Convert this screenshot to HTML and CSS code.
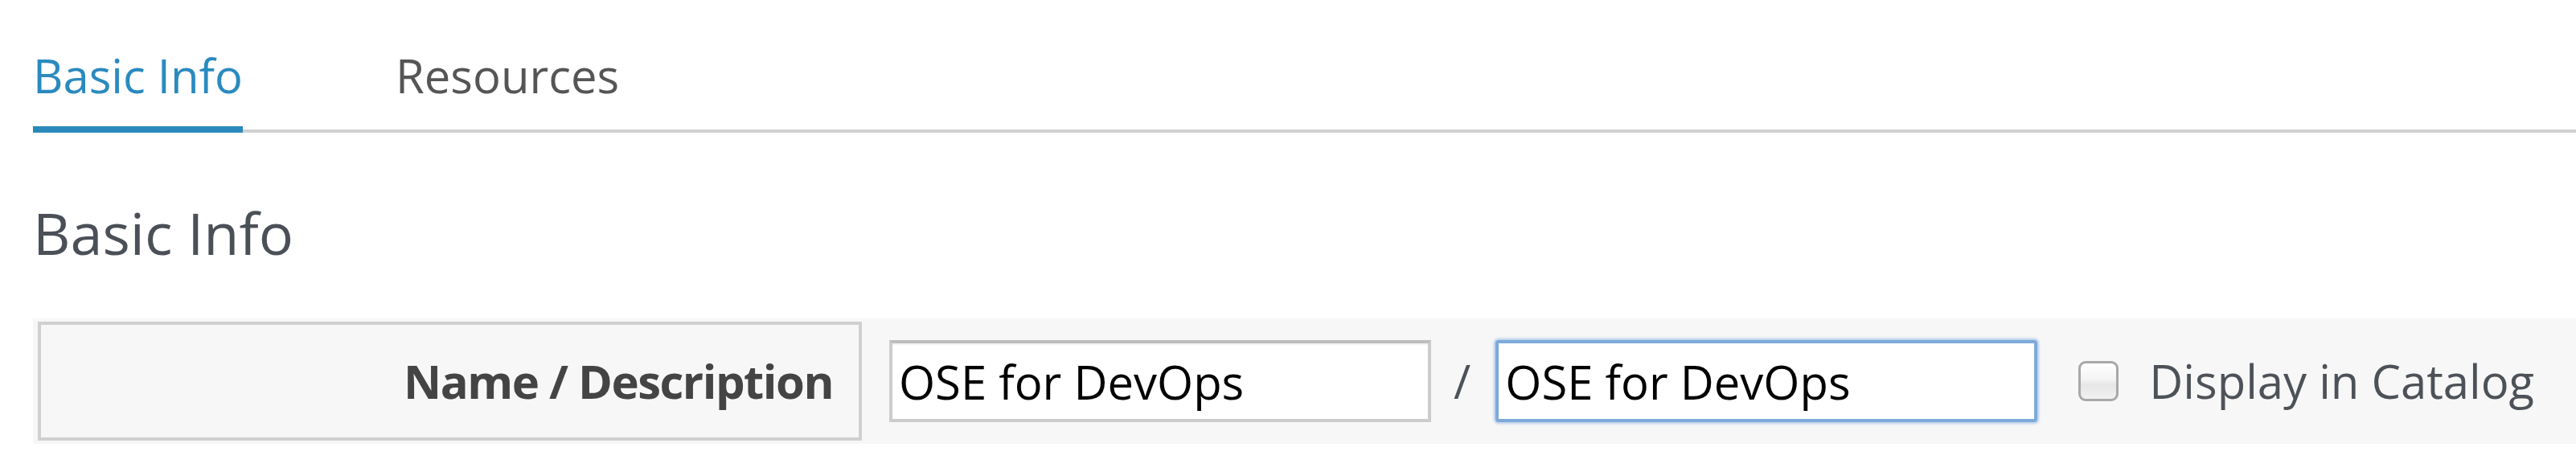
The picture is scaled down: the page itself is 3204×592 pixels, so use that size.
FILE: index.html
```html
<!DOCTYPE html>
<html lang="en">
<head>
<meta charset="utf-8">
<title>Basic Info</title>
<link rel="stylesheet" href="styles.css">
</head>
<body>
<div class="page">
  <ul class="tabs">
    <li class="tab active"><a href="#">Basic Info</a></li>
    <li class="tab"><a href="#">Resources</a></li>
  </ul>
  <h3 class="section-title">Basic Info</h3>
  <div class="form-row">
    <div class="row-label">Name / Description</div>
    <div class="row-fields">
      <input class="field" type="text" value="OSE for DevOps">
      <span class="sep">/</span>
      <input class="field focused" type="text" value="OSE for DevOps">
      <label class="check"><input class="check-box" type="checkbox"><span class="check-text">Display in Catalog</span></label>
    </div>
  </div>
</div>
</body>
</html>
```

FILE: styles.css
```css
html, body {
  margin: 0;
  padding: 0;
  background: #fff;
}

body {
  font-family: "Open Sans", "Liberation Sans", sans-serif;
  color: #4d5258;
}

.page {
  padding: 0 0 0 41px;
}

.tabs {
  list-style: none;
  margin: 0;
  padding: 0;
  display: flex;
  align-items: flex-end;
  border-bottom: 4px solid #d1d1d1;
}

.tab {
  margin-right: 190px;
}

.tab a {
  display: block;
  font-size: 58px;
  line-height: 80px;
  padding: 54px 0 23px 0;
  border-bottom: 8px solid transparent;
  margin-bottom: -4px;
  color: #555;
  text-decoration: none;
}

.tab.active a {
  color: #2a8abf;
  border-bottom-color: #2a89bb;
}

.section-title {
  margin: 75px 0 58px 0;
  font-size: 72px;
  font-weight: 400;
  line-height: 98px;
  color: #4b5058;
}

.form-row {
  display: flex;
  align-items: center;
  background: #f7f7f7;
  padding: 4px 0 4px 6px;
}

.row-label {
  box-sizing: border-box;
  width: 1025px;
  height: 148px;
  border: 4px solid #d0d0d0;
  display: flex;
  align-items: center;
  justify-content: flex-end;
  padding-right: 32px;
  font-size: 58px;
  font-weight: 700;
  letter-spacing: -1.5px;
  color: #444;
  line-height: 80px;
}

.row-fields {
  display: flex;
  align-items: center;
  margin-left: 34px;
}

.field {
  box-sizing: border-box;
  width: 674px;
  height: 102px;
  margin: 0;
  padding: 0 8px;
  border: 4px solid #cccccc;
  border-top-color: #bdbdbd;
  border-radius: 0;
  background: #fff;
  font-family: "Open Sans", "Liberation Sans", sans-serif;
  font-size: 58px;
  color: #000;
  outline: none;
  box-shadow: inset 0 2px 2px rgba(0, 0, 0, 0.06);
}

.field.focused {
  border-color: #7eaadb;
  border-radius: 4px;
  box-shadow: 0 0 3px 2px rgba(126, 170, 219, 0.55);
}

.sep {
  font-size: 58px;
  line-height: 80px;
  color: #4d5258;
  margin: 0 31px 0 28px;
}

.check {
  display: flex;
  align-items: center;
  margin-left: 51px;
}

.check-box {
  appearance: none;
  -webkit-appearance: none;
  box-sizing: border-box;
  width: 50px;
  height: 50px;
  margin: 0;
  border: 3px solid #a8a8a8;
  border-radius: 9px;
  background: linear-gradient(#ffffff 0%, #f4f4f4 45%, #e6e6e6 60%, #f1f1f1 100%);
}

.check-text {
  margin-left: 38px;
  font-size: 58px;
  line-height: 80px;
  color: #4d5258;
}
```
